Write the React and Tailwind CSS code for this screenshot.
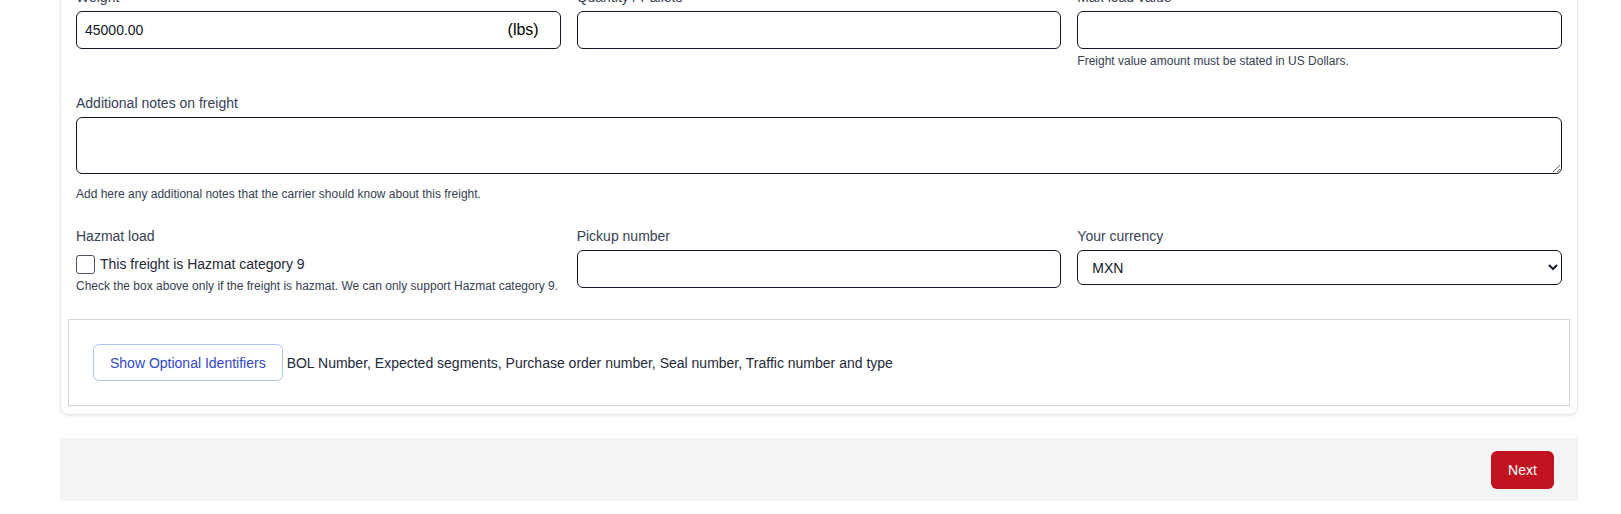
import React, { useState } from 'react';

// shared look for the bordered text boxes in the freight form
const inputCls =
  "block w-full h-[38px] rounded-md border border-gray-900 bg-white px-2 text-sm text-gray-900 outline-none";

const Field = ({ label, children, help, helpCls = "mt-1", className = "" }) => (
  <div className={className}>
    <label className="mb-1 block text-sm leading-5 text-gray-700">{label}</label>
    {children}
    {help && <p className={`${helpCls} text-xs leading-4 text-gray-700`}>{help}</p>}
  </div>
);

const App = () => {
  const [weight, setWeight] = useState("45000.00");
  const [pallets, setPallets] = useState("");
  const [maxValue, setMaxValue] = useState("");
  const [notes, setNotes] = useState("");
  const [hazmat, setHazmat] = useState(false);
  const [pickup, setPickup] = useState("");
  const [currency, setCurrency] = useState("MXN");

  return (
    <div className="min-h-screen overflow-hidden bg-white font-['Liberation_Sans',Arial,sans-serif]">
      <div className="ml-[60px] w-[1518px]">
        {/* FREIGHT DETAILS CARD */}
        <div className="-mt-[40px] rounded-lg border border-gray-200 bg-white pt-[26px] pb-2 shadow-[0_1px_3px_rgba(0,0,0,0.08)]">
          <div className="grid grid-cols-3 gap-x-4 gap-y-6 px-[15px]">
            <Field label="Weight">
              <div className="relative">
                <input className={inputCls} value={weight} onChange={(e) => setWeight(e.target.value)} />
                <span className="absolute right-[22px] top-1/2 -translate-y-1/2 text-base text-black">(lbs)</span>
              </div>
            </Field>

            <Field label="Quantity / Pallets">
              <input className={inputCls} value={pallets} onChange={(e) => setPallets(e.target.value)} />
            </Field>

            <Field label="Max load value" help="Freight value amount must be stated in US Dollars.">
              <input className={inputCls} value={maxValue} onChange={(e) => setMaxValue(e.target.value)} />
            </Field>

            <Field
              className="col-span-3"
              label="Additional notes on freight"
              help="Add here any additional notes that the carrier should know about this freight."
              helpCls="mt-3"
            >
              <textarea
                className="block h-[57px] w-full rounded-md border border-gray-900 bg-white px-2 py-1 text-sm text-gray-900 outline-none"
                value={notes}
                onChange={(e) => setNotes(e.target.value)}
              />
            </Field>

            <Field
              label="Hazmat load"
              help="Check the box above only if the freight is hazmat. We can only support Hazmat category 9."
              helpCls="mt-1"
            >
              <label className="mt-2 flex h-5 items-center gap-[5px] text-sm text-gray-800">
                <input
                  type="checkbox"
                  checked={hazmat}
                  onChange={(e) => setHazmat(e.target.checked)}
                  className="h-[19px] w-[19px] appearance-none rounded-[3px] border border-gray-600 bg-white checked:bg-blue-600"
                />
                This freight is Hazmat category 9
              </label>
            </Field>

            <Field label="Pickup number">
              <input className={inputCls} value={pickup} onChange={(e) => setPickup(e.target.value)} />
            </Field>

            <Field label="Your currency">
              <select
                className="block h-[35px] w-full rounded-md border border-gray-900 bg-white pl-2.5 text-sm text-gray-900 outline-none"
                value={currency}
                onChange={(e) => setCurrency(e.target.value)}
              >
                <option value="MXN">MXN</option>
                <option value="USD">USD</option>
                <option value="CAD">CAD</option>
              </select>
            </Field>
          </div>

          {/* OPTIONAL IDENTIFIERS */}
          <div className="mx-[7px] mt-[25px] flex items-center border border-gray-300 px-6 py-6">
            <button className="h-[37px] rounded-md border border-[#a8c7f5] bg-white px-4 text-sm text-[#2f47c8]">
              Show Optional Identifiers
            </button>
            <span className="ml-1 text-sm text-gray-800">
              BOL Number, Expected segments, Purchase order number, Seal number, Traffic number and type
            </span>
          </div>
        </div>

        {/* FOOTER ACTIONS */}
        <div className="mt-[23px] flex h-[63px] items-center justify-end bg-gray-100 pr-6">
          <button className="h-[38px] w-[63px] rounded-md bg-[#c1121f] text-sm text-white">Next</button>
        </div>
      </div>
    </div>
  );
};

export default App;
